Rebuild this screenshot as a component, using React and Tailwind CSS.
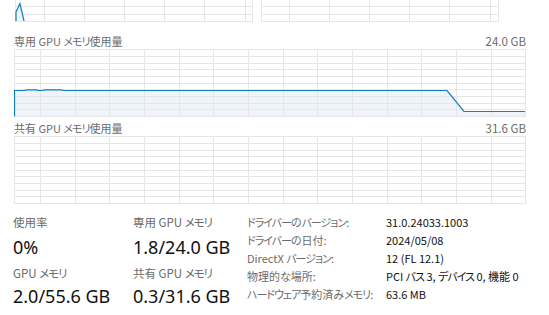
import React from "react";

const GRID = "#e6e6e6";
const BLUE = "#117dbb";
const FILL = "#eef4f9";

function K({ t }) {
  const parts = t.split(/([\u30A0-\u30FF]+)/);
  return (
    <>
      {parts.map((p, i) =>
        /[\u30A0-\u30FF]/.test(p) ? (
          <span key={i} className="tracking-[-1px]">{p}</span>
        ) : (
          <React.Fragment key={i}>{p}</React.Fragment>
        )
      )}
    </>
  );
}

function SmallGraph({ vx, spike }) {
  const hy = [6.5, 14.5];
  return (
    <svg width="239" height="22" className="block shrink-0">
      {hy.map((y) => (
        <line key={y} x1="0" x2="238" y1={y} y2={y} stroke={GRID} strokeWidth="1" />
      ))}
      {vx.map((x) => (
        <line key={x} x1={x} x2={x} y1="0" y2="22" stroke={GRID} strokeWidth="1" />
      ))}
      <line x1="0.5" x2="0.5" y1="0" y2="22" stroke={GRID} />
      <line x1="237.5" x2="237.5" y1="0" y2="22" stroke={GRID} />
      <line x1="0" x2="238" y1="21.5" y2="21.5" stroke={GRID} />
      {spike && (
        <>
          <polygon points="1,21 1,12 5,3.5 9,21" fill={FILL} />
          <polyline points="1,21 1,12 5,3.5 9,21" fill="none" stroke={BLUE} strokeWidth="1.2" />
        </>
      )}
    </svg>
  );
}

function BigGraph({ line }) {
  const vx = [];
  for (let k = 0; k < 14; k++) vx.push(Math.round(26 + k * 34.67) + 0.5);
  const hy = [7.5, 14.5, 20.5, 27.5, 34.5, 40.5, 47.5, 54.5, 60.5];
  const pts = "0.5,41.5 10,41.5 13,40.8 22,40.8 25,41.5 28,41.5 31,40.8 47,40.8 50,41.5 433,41.5 450,62.5 511,62.5";
  return (
    <svg width="512" height="68" className="block">
      {line && <polygon points={`${pts} 511,67 0.5,67`} fill={FILL} />}
      {hy.map((y) => (
        <line key={y} x1="0" x2="512" y1={y} y2={y} stroke={GRID} strokeWidth="1" />
      ))}
      {vx.map((x) => (
        <line key={x} x1={x} x2={x} y1="0" y2="68" stroke={GRID} strokeWidth="1" />
      ))}
      <rect x="0.5" y="0.5" width="511" height="67" fill="none" stroke={GRID} strokeWidth="1" />
      {line && (
        <>
          <polyline points={pts} fill="none" stroke={BLUE} strokeWidth="1.2" />
          <line x1="0.5" x2="0.5" y1="41" y2="67.5" stroke={BLUE} strokeWidth="1.2" />
        </>
      )}
    </svg>
  );
}

const jp = "[font-family:'Noto_Sans_CJK_JP',sans-serif] [font-feature-settings:'palt']";
const big = "h-[24px] text-[18px] leading-[24px] text-[#111] [font-family:'Noto_Sans','Noto_Sans_CJK_JP',sans-serif]";
const lbl = "h-[16px] text-[11.5px] leading-[16px] text-[#6b6b6b]";

export default function App() {
  const details = [
    ["ドライバーのバージョン:", "31.0.24033.1003"],
    ["ドライバーの日付:", "2024/05/08"],
    ["DirectX バージョン:", "12 (FL 12.1)"],
    ["物理的な場所:", "PCI バス 3, デバイス 0, 機能 0"],
    ["ハードウェア予約済みメモリ:", "63.6 MB"],
  ];
  return (
    <div className={`w-[549px] h-[315px] bg-white overflow-hidden ${jp}`}>
      <div className="flex h-[22px] pl-[15px] gap-[7px]">
        <SmallGraph vx={[29.5, 69.5, 109.5, 149.5, 189.5, 230.5]} spike />
        <SmallGraph vx={[28.5, 68.5, 108.5, 148.5, 188.5, 229.5]} />
      </div>

      <div className="ml-[14px] w-[512px] mt-[11px] h-[16px] flex justify-between text-[11px] leading-[16px] text-[#6b6b6b]">
        <span><K t="専用 GPU メモリ使用量" /></span>
        <span className="text-[11.5px]">24.0 GB</span>
      </div>
      <div className="ml-[14px]">
        <BigGraph line />
      </div>

      <div className="ml-[14px] w-[512px] mt-[3px] h-[16px] flex justify-between text-[11px] leading-[16px] text-[#6b6b6b]">
        <span><K t="共有 GPU メモリ使用量" /></span>
        <span className="text-[11.5px]">31.6 GB</span>
      </div>
      <div className="ml-[14px]">
        <BigGraph />
      </div>

      <div className="flex pl-[13px] mt-[9px]">
        <div className="w-[120px] flex flex-col pt-[1px]">
          <div className={lbl}>使用率</div>
          <div className={`mt-[5px] ${big}`}>0%</div>
          <div className={`mt-[6px] ${lbl}`}><K t="GPU メモリ" /></div>
          <div className={`mt-[3px] ${big}`}>2.0/55.6 GB</div>
        </div>
        <div className="w-[114px] flex flex-col pt-[1px]">
          <div className={lbl}><K t="専用 GPU メモリ" /></div>
          <div className={`mt-[5px] ${big}`}>1.8/24.0 GB</div>
          <div className={`mt-[6px] ${lbl}`}><K t="共有 GPU メモリ" /></div>
          <div className={`mt-[3px] ${big}`}>0.3/31.6 GB</div>
        </div>
        <div className="flex flex-col text-[11px] leading-[18px]">
          {details.map(([k, v]) => (
            <div key={k} className="flex h-[18px] whitespace-nowrap">
              <span className="w-[139px] text-[#6b6b6b]"><K t={k} /></span>
              <span className="text-[#111]"><K t={v} /></span>
            </div>
          ))}
        </div>
      </div>
    </div>
  );
}
